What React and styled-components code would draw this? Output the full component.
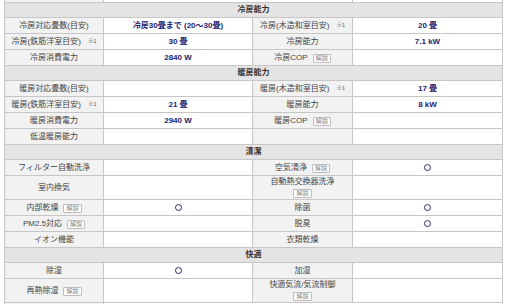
import React from "react";
import styled, { createGlobalStyle } from "styled-components";

const Global = createGlobalStyle`
  html, body { margin: 0; padding: 0; background: #fff; }
  body { font-family: "Liberation Sans", "Noto Sans CJK JP", sans-serif; }
`;

const Page = styled.div`
  padding: 0 0 0 4px;
  width: 512px;
  height: 304px;
  overflow: hidden;
  box-sizing: border-box;
`;

const Table = styled.table`
  width: 498px;
  table-layout: fixed;
  border-collapse: collapse;
  font-size: 8px;
  color: #444;
`;

const Td = styled.td`
  border: 1px solid #c6c6c6;
  padding: 0;
  height: ${(p) => (p.$tall ? 23 : 15)}px;
  line-height: 10px;
  text-align: center;
  vertical-align: middle;
  white-space: nowrap;
`;

const Label = styled(Td)`
  background: #f2f2f2;
  color: #444;
`;

const Value = styled(Td)`
  background: #fff;
  color: #232370;
  font-weight: bold;
`;

const Header = styled.td`
  border: 1px solid #c6c6c6;
  background: #e4e4e4;
  height: 14px;
  padding: 0;
  text-align: center;
  vertical-align: middle;
  font-weight: bold;
  color: #333;
  line-height: 10px;
`;

const EdgeCell = styled.td`
  border: 1px solid #c6c6c6;
  border-top: ${(p) => (p.$top ? "none" : "1px solid #c6c6c6")};
  border-bottom: ${(p) => (p.$top ? "1px solid #c6c6c6" : "none")};
  height: 2px;
  padding: 0;
  background: ${(p) => (p.$label ? "#f2f2f2" : "#fff")};
`;

const Note = styled.span`
  font-size: 5.5px;
  margin-left: 7px;
  color: #555;
  vertical-align: 1px;
`;

const Badge = styled.span`
  display: inline-block;
  border: 1px solid #bdbdbd;
  border-radius: 1px;
  background: #fff;
  color: #888;
  font-size: 6px;
  line-height: 7px;
  padding: 0 2px;
  margin-left: ${(p) => (p.$block ? 0 : 5)}px;
  font-weight: normal;
`;

const Stack = styled.div`
  display: flex;
  flex-direction: column;
  align-items: center;
  gap: 2px;
`;

const Circle = styled.span`
  display: inline-block;
  width: 5px;
  height: 5px;
  border: 1.3px solid #2a2a6a;
  border-radius: 50%;
  vertical-align: middle;
`;

const Col = styled.col`
  width: ${(p) => p.$w}px;
`;

const L = ({ children, note, badge, tall, stack }) => (
  <Label $tall={tall}>
    {stack ? (
      <Stack>
        <span>{children}</span>
        <Badge $block>解説</Badge>
      </Stack>
    ) : (
      <>
        {children}
        {note && <Note>※1</Note>}
        {badge && <Badge>解説</Badge>}
      </>
    )}
  </Label>
);

const V = ({ children, circle, tall }) => (
  <Value $tall={tall}>{circle ? <Circle /> : children}</Value>
);

export default function App() {
  return (
    <Page>
      <Global />
      <Table>
        <colgroup>
          <Col $w={99} />
          <Col $w={149} />
          <Col $w={100} />
          <Col $w={150} />
        </colgroup>
        <tbody>
          <tr>
            <EdgeCell $top $label />
            <EdgeCell $top colSpan={2} />
            <EdgeCell $top />
          </tr>
          <tr><Header colSpan={4}>冷房能力</Header></tr>
          <tr>
            <L>冷房対応畳数(目安)</L>
            <V>冷房30畳まで (20～30畳)</V>
            <L note>冷房(木造和室目安)</L>
            <V>20 畳</V>
          </tr>
          <tr>
            <L note>冷房(鉄筋洋室目安)</L>
            <V>30 畳</V>
            <L>冷房能力</L>
            <V>7.1 kW</V>
          </tr>
          <tr>
            <L>冷房消費電力</L>
            <V>2840 W</V>
            <L badge>冷房COP</L>
            <V />
          </tr>
          <tr><Header colSpan={4}>暖房能力</Header></tr>
          <tr>
            <L>暖房対応畳数(目安)</L>
            <V />
            <L note>暖房(木造和室目安)</L>
            <V>17 畳</V>
          </tr>
          <tr>
            <L note>暖房(鉄筋洋室目安)</L>
            <V>21 畳</V>
            <L>暖房能力</L>
            <V>8 kW</V>
          </tr>
          <tr>
            <L>暖房消費電力</L>
            <V>2940 W</V>
            <L badge>暖房COP</L>
            <V />
          </tr>
          <tr>
            <L>低温暖房能力</L>
            <V />
            <L />
            <V />
          </tr>
          <tr><Header colSpan={4}>清潔</Header></tr>
          <tr>
            <L>フィルター自動洗浄</L>
            <V />
            <L badge>空気清浄</L>
            <V circle />
          </tr>
          <tr>
            <L tall>室内換気</L>
            <V tall />
            <L tall stack>自動熱交換器洗浄</L>
            <V tall />
          </tr>
          <tr>
            <L badge>内部乾燥</L>
            <V circle />
            <L>除菌</L>
            <V circle />
          </tr>
          <tr>
            <L badge>PM2.5対応</L>
            <V />
            <L>脱臭</L>
            <V circle />
          </tr>
          <tr>
            <L>イオン機能</L>
            <V />
            <L>衣類乾燥</L>
            <V />
          </tr>
          <tr><Header colSpan={4}>快適</Header></tr>
          <tr>
            <L>除湿</L>
            <V circle />
            <L>加湿</L>
            <V />
          </tr>
          <tr>
            <L tall badge>再熱除湿</L>
            <V tall />
            <L tall stack>快適気流/気流制御</L>
            <V tall />
          </tr>
          <tr>
            <EdgeCell $label />
            <EdgeCell colSpan={3} />
          </tr>
        </tbody>
      </Table>
    </Page>
  );
}
